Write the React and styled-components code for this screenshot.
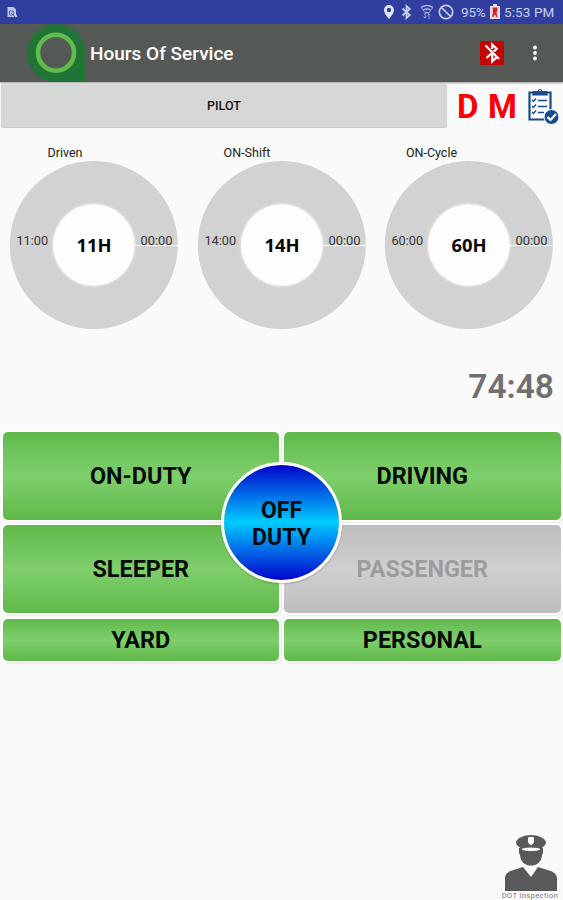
import React from "react";
import styled, { createGlobalStyle } from "styled-components";

const GlobalStyle = createGlobalStyle`
  * { box-sizing: border-box; }
  body { margin: 0; background: #fafafa; font-family: Roboto, sans-serif; }
  button { font-family: inherit; border: 0; padding: 0; margin: 0; }
`;

const Screen = styled.div`
  display: flex;
  flex-direction: column;
  width: 563px;
  height: 900px;
  overflow: hidden;
  background: #fafafa;
`;

const StatusBar = styled.header`
  display: flex;
  flex: none;
  align-items: center;
  justify-content: space-between;
  height: 24px;
  padding: 0 7px 0 7px;
  background: #303f9f;
  color: #c9cff0;
`;

const StatusGroup = styled.div`
  display: flex;
  align-items: center;
  font-size: 13.5px;
  line-height: 22px;
  white-space: nowrap;
`;

const StatusText = styled.span`
  width: ${(p) => p.$width}px;
  margin-left: ${(p) => p.$gap}px;
  letter-spacing: ${(p) => p.$tracking || 0}px;
`;

const Icon = styled.svg`
  display: block;
  flex: none;
  margin-left: ${(p) => p.$gap || 0}px;
`;

const AppBar = styled.div`
  display: flex;
  flex: none;
  align-items: center;
  height: 58px;
  padding: 0 25px 0 27px;
  background: #555955;
  box-shadow: 0 1px 2px rgba(0, 0, 0, 0.4);
`;

const Title = styled.h1`
  flex: 1;
  margin: 2px 0 0 4px;
  color: #fff;
  font-size: 19px;
  font-weight: 500;
  line-height: 24px;
`;

const PilotRow = styled.div`
  display: flex;
  flex: none;
  align-items: center;
  height: 48px;
  padding: 0 2px 2px 1px;
`;

const PilotButton = styled.button`
  width: 446px;
  height: 43px;
  border-radius: 2px;
  background: #d6d8d7;
  box-shadow: 0 1px 1px rgba(0, 0, 0, 0.22);
  color: #111;
  font-size: 12.5px;
  font-weight: 500;
`;

const Flag = styled.span`
  width: ${(p) => p.$width}px;
  margin: 3px 0 0 ${(p) => p.$gap}px;
  color: #fb0007;
  font-size: 33px;
  font-weight: 700;
  line-height: 40px;
`;

const Gauges = styled.section`
  display: grid;
  grid-template-columns: repeat(3, 1fr);
  flex: none;
  height: 222px;
  padding-top: 10px;
`;

const Gauge = styled.svg`
  display: block;
  width: 100%;
  height: 200px;
  font-family: Roboto, sans-serif;
`;

const Timer = styled.div`
  flex: none;
  height: 76px;
  padding: 14px 9px 0 0;
  color: #707070;
  font-size: 33.5px;
  font-weight: 600;
  line-height: 42px;
  text-align: right;
`;

const DutyPanel = styled.section`
  position: relative;
  display: grid;
  flex: none;
  grid-template-columns: 276.5px 276.5px;
  grid-template-rows: 88px 88px 42px;
  gap: 5.500px 5px;
  padding: 3.5px 0 2px 2.5px;
`;

const DutyButton = styled.button`
  border-radius: 5px;
  background: ${(p) =>
    p.$muted
      ? "linear-gradient(#bdbdbd, #d0d0d0 50%, #bcbcbc)"
      : "linear-gradient(#60b94b, #7fcf6d 50%, #5fb949)"};
  box-shadow: 0 0 0 2px #fff, 1px 1px 1px 2px rgba(0, 0, 0, 0.07);
  color: ${(p) => (p.$muted ? "#9c9c9c" : "#060c05")};
  font-size: 23.400px;
  font-weight: 700;
`;

const OffDuty = styled.button`
  position: absolute;
  top: 34px;
  left: 221px;
  width: 121px;
  height: 121px;
  padding-top: 3px;
  border: 3px solid #fff;
  border-radius: 50%;
  background: linear-gradient(#0203cc, #00cbff 50%, #0203cc) padding-box;
  box-shadow: 0 1px 2px rgba(0, 0, 0, 0.22);
  color: #030a12;
  font-size: 23px;
  font-weight: 700;
  line-height: 27px;
`;

const Footer = styled.footer`
  display: flex;
  flex: 1;
  flex-direction: column;
  align-items: flex-end;
  justify-content: flex-end;
  padding-right: 4px;
`;

const Inspection = styled.div`
  display: flex;
  flex-direction: column;
  align-items: center;
  width: 58px;
`;

const InspectionLabel = styled.span`
  height: 8px;
  color: #777;
  font-size: 7.5px;
  line-height: 8px;
  letter-spacing: 0.4px;
  white-space: nowrap;
`;

const gauges = [
  { label: "Driven", x: 65, left: "11:00", total: "11H" },
  { label: "ON-Shift", x: 59, left: "14:00", total: "14H" },
  { label: "ON-Cycle", x: 56.5, left: "60:00", total: "60H" },
];

const duties = [
  { label: "ON-DUTY" },
  { label: "DRIVING" },
  { label: "SLEEPER" },
  { label: "PASSENGER", muted: true },
  { label: "YARD" },
  { label: "PERSONAL" },
];

function GaugeDial({ label, x, left, total }) {
  return (
    <Gauge viewBox="0 0 187.67 200">
      <text x={x} y="17" fontSize="12.5" fill="#222" textAnchor="middle">{label}</text>
      <circle cx="93.8" cy="105" r="84" fill="#d2d2d2" />
      <circle cx="93.8" cy="105" r="42.500" fill="#dedede" />
      <circle cx="93.8" cy="105" r="40.8" fill="#fdfdfd" />
      <path d="M135 105.5H178" stroke="#fafafa" strokeWidth="1.2" />
      <text x="32.3" y="105" fontSize="12.7" fill="#333" textAnchor="middle">{left}</text>
      <text x="156.5" y="105" fontSize="12.9" fill="#333" textAnchor="middle">00:00</text>
      <text x="94" y="112" fontFamily="Open Sans, sans-serif" fontSize="18.4" fontWeight="700" fill="#050505" textAnchor="middle">{total}</text>
    </Gauge>
  );
}

function Logo() {
  return (
    <Icon width="59" height="58" viewBox="0 0 59 58">
      <path d="M29 0C13 0 0 13 0 29s13 29 29 29h29.5V29C58.500 13 45 0 29 0Z" fill="#227337" />
      <circle cx="29" cy="28.700" r="18" fill="#555955" stroke="#5fbd49" strokeWidth="4.600" />
    </Icon>
  );
}

function StatusIcons() {
  return (
    <>
      <Icon width="12" height="16" viewBox="0 0 12 16">
        <path fillRule="evenodd" d="M6 1a5 5 0 0 0-5 5c0 3.500 5 9 5 9s5-5.500 5-9a5 5 0 0 0-5-5Zm0 2.800a2.200 2.200 0 1 1 0 4.400 2.200 2.200 0 0 1 0-4.400Z" fill="#e2e6fb" />
      </Icon>
      <Icon $gap={6} width="11" height="16" viewBox="0 0 11 16">
        <path d="M1.500 4.500 8.800 11 5.500 14V2l3.300 3-7.300 6.500" fill="none" stroke="#c9cff0" strokeWidth="1.800" />
      </Icon>
      <Icon $gap={8} width="14" height="16" viewBox="0 0 14 16">
        <path d="M1 3.300Q7-.3 13 3.300M3 6.200q4-2.500 8 0M5 9q2-1.200 4 0" fill="none" stroke="#aab3e4" strokeWidth="1.500" />
        <path d="M1.500 4 6 10M12.500 4 8 10" stroke="#8e99d6" strokeWidth="1" />
        <path d="M5 9v5M3.600 12.500 5 14.200l1.400-1.700M9 15v-5M7.600 11.500 9 9.800l1.400 1.700" fill="none" stroke="#929cd7" strokeWidth="1" />
      </Icon>
      <Icon $gap={4} width="16" height="16" viewBox="0 0 16 16">
        <circle cx="8" cy="8" r="6.700" fill="none" stroke="#c9cff0" strokeWidth="1.700" />
        <path d="m3.500 3.500 9 9" stroke="#c9cff0" strokeWidth="1.700" />
      </Icon>
    </>
  );
}

function BatteryIcon() {
  return (
    <Icon $gap={3} width="10" height="16" viewBox="0 0 10 16">
      <path d="M3 0h4v2h3v13H0V2h3Z" fill="#e5dfed" />
      <path d="M2.500 3.500h5v3L6.500 8l1 5H6L5 10l-1.500 3H2l1-5Z" fill="#d3202a" />
    </Icon>
  );
}

function BluetoothOff() {
  return (
    <Icon width="24" height="24" viewBox="0 0 24 24">
      <rect width="24" height="24" rx="1.500" fill="#c50404" />
      <path d="M5.500 4.500 19 18M12.200 8V3.500l4.500 4.300-2.700 2.700M6.500 17l5.700-5.500v9l4.300-4.100" fill="none" stroke="#fff" strokeWidth="2.200" />
    </Icon>
  );
}

function Checklist() {
  return (
    <Icon $gap={10} width="32" height="39" viewBox="0 0 32 39">
      <path d="M2.500 6.500h21v27h-21Z" fill="#fff" stroke="#154a8b" strokeWidth="2.200" />
      <path d="M6 5h4.500a2.600 2.600 0 0 1 5 0H20l1 4.500H5Z" fill="#154a8b" />
      <circle cx="13" cy="4.500" r=".8" fill="#fff" />
      <path d="M11 14.500h9M11 20.500h9M11 26.500h6" stroke="#154a8b" strokeWidth="1.500" />
      <path d="m5 14 1.500 1.500L9 12.500M5 20l1.500 1.500L9 18.500M5 26l1.500 1.500L9 24.500" fill="none" stroke="#154a8b" strokeWidth="1.300" />
      <circle cx="24.500" cy="31" r="7.500" fill="#154f91" stroke="#fff" strokeWidth="1" />
      <path d="m20.500 31 3 3 5.500-6" fill="none" stroke="#fff" strokeWidth="2.200" />
    </Icon>
  );
}

function Officer() {
  return (
    <Icon width="54" height="58" viewBox="0 0 54 58">
      <path d="M13 8.500c0-4 8-7.500 15-7.500s15 3.500 15 7.500c0 2.500-2.500 4-4 5v2.500c-6-2.500-16-2.500-22 0v-2.500c-1.500-1-4-2.500-4-5Z" fill="#595959" />
      <path d="M16 14q12-3 24 0v5l-1 2c-.5 5-2.500 7.500-5 9-3.500 2-8.500 2-12 0-2.500-1.500-4.500-4-5-9l-1-2Z" fill="#595959" />
      <ellipse cx="28" cy="15.200" rx="9.200" ry="1.700" fill="#fafafa" />
      <path d="M25 3.500q3-1.500 6 0v4c0 1.800-1.500 2.800-3 3.500-1.500-.7-3-1.700-3-3.500Z" fill="#fafafa" />
      <path d="M2 57V44c0-4 3-6.300 7-7.500l11-3.500 8 10 7-10 11 3.500c5 1.500 8 4 8 8V57Z" fill="#595959" />
    </Icon>
  );
}

export default function App() {
  return (
    <>
      <GlobalStyle />
      <Screen>
        <StatusBar>
          <Icon width="11" height="12" viewBox="0 0 11 12">
            <path d="M.5 1h6L9 3.500V8l1.500 3H.5Z" fill="#bfc8ee" />
            <path d="M2.500 5h4v4h-4ZM4 7l4 4" fill="none" stroke="#5966b6" />
          </Icon>
          <StatusGroup>
            <StatusIcons />
            <StatusText $width={26} $gap={7} $tracking={-0.2}>95%</StatusText>
            <BatteryIcon />
            <StatusText $width={52} $gap={4} $tracking={0.1}>5:53 PM</StatusText>
          </StatusGroup>
        </StatusBar>
        <AppBar>
          <Logo />
          <Title>Hours Of Service</Title>
          <BluetoothOff />
          <Icon $gap={28} width="6" height="16" viewBox="0 0 6 16">
            <circle cx="3" cy="2.500" r="1.900" fill="#fff" />
            <circle cx="3" cy="8" r="1.900" fill="#fff" />
            <circle cx="3" cy="13.500" r="1.900" fill="#fff" />
          </Icon>
        </AppBar>
        <PilotRow>
          <PilotButton>PILOT</PilotButton>
          <Flag $gap={10} $width={22}>D</Flag>
          <Flag $gap={9} $width={29}>M</Flag>
          <Checklist />
        </PilotRow>
        <Gauges>
          {gauges.map((g) => <GaugeDial key={g.label} {...g} />)}
        </Gauges>
        <Timer>74:48</Timer>
        <DutyPanel>
          {duties.map((d) => <DutyButton key={d.label} $muted={d.muted}>{d.label}</DutyButton>)}
          <OffDuty>OFF<br />DUTY</OffDuty>
        </DutyPanel>
        <Footer>
          <Inspection>
            <Officer />
            <InspectionLabel>DOT inspection</InspectionLabel>
          </Inspection>
        </Footer>
      </Screen>
    </>
  );
}
